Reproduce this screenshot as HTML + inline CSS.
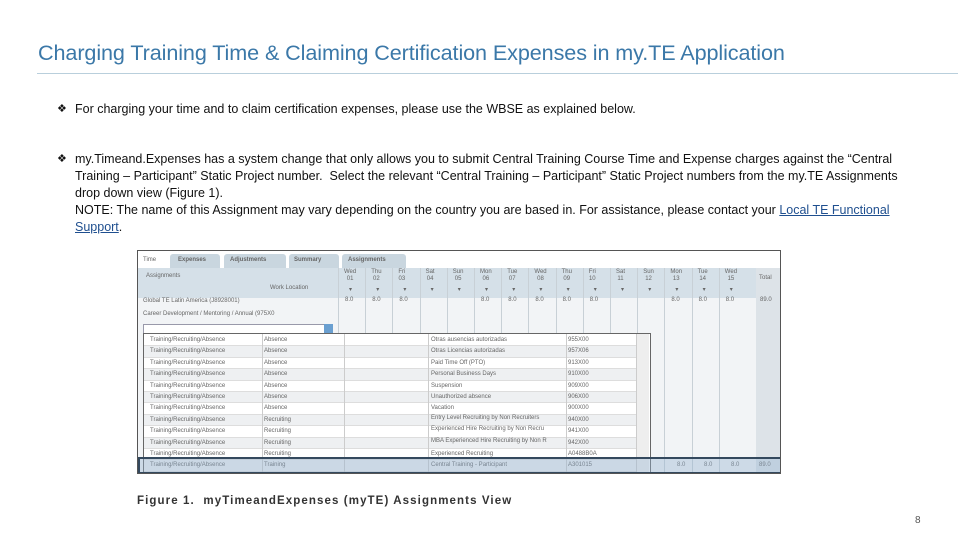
<!DOCTYPE html>
<html><head><meta charset="utf-8"><style>
*{margin:0;padding:0;box-sizing:border-box}
body{width:960px;height:540px;background:#fff;position:relative;overflow:hidden;font-family:"Liberation Sans",sans-serif}
.title{position:absolute;left:38px;top:40px;font-size:21.6px;color:#3b78a8;white-space:nowrap;letter-spacing:-0.1px}
.rule{position:absolute;left:37px;top:73px;width:921px;height:1px;background:#b9cfdc}
.b{position:absolute;left:57px;font-size:12.5px;color:#111;line-height:17px;white-space:nowrap}
.b .d{position:absolute;left:0;top:0;font-size:11px}
.b p{margin-left:18px}
a{color:#1f4f8f}
.s{position:absolute;font-size:6px;color:#666;white-space:nowrap;line-height:11px}
.abs{position:absolute}
</style></head><body>
<div class="title">Charging Training Time &amp; Claiming Certification Expenses in my.TE Application</div>
<div class="rule"></div>
<div class="b" style="top:101px"><span class="d">❖</span><p>For charging your time and to claim certification expenses, please use the WBSE as explained below.</p></div>
<div class="b" style="top:151px"><span class="d">❖</span><p>my.Timeand.Expenses has a system change that only allows you to submit Central Training Course Time and Expense charges against the “Central<br>Training – Participant” Static Project number.&nbsp; Select the relevant “Central Training – Participant” Static Project numbers from the my.TE Assignments<br>drop down view (Figure 1).<br>NOTE: The name of this Assignment may vary depending on the country you are based in. For assistance, please contact your <a href="#">Local TE Functional<br>Support</a>.</p></div>

<div class="abs" style="left:137px;top:250px;width:644px;height:224px;border:1px solid #555;background:#fff;overflow:hidden">
 <div class="s" style="left:5px;top:4px">Time</div>
 <div class="abs" style="left:32px;top:3px;width:50px;height:14px;background:#c9d6df;border-radius:3px 3px 0 0"></div><div class="s" style="left:40px;top:4px;font-weight:bold">Expenses</div>
 <div class="abs" style="left:86px;top:3px;width:62px;height:14px;background:#c9d6df;border-radius:3px 3px 0 0"></div><div class="s" style="left:92px;top:4px;font-weight:bold">Adjustments</div>
 <div class="abs" style="left:151px;top:3px;width:50px;height:14px;background:#c9d6df;border-radius:3px 3px 0 0"></div><div class="s" style="left:156px;top:4px;font-weight:bold">Summary</div>
 <div class="abs" style="left:204px;top:3px;width:64px;height:14px;background:#c9d6df;border-radius:3px 3px 0 0"></div><div class="s" style="left:210px;top:4px;font-weight:bold">Assignments</div>
 <div class="abs" style="left:0;top:17px;width:644px;height:30px;background:#d5e0e8"></div>
 <div class="s" style="left:8px;top:20px">Assignments</div>
 <div class="s" style="left:132px;top:32px">Work Location</div>
 <div class="abs" style="left:0;top:47px;width:644px;height:177px;background:#f2f4f6"></div>
 <div class="abs" style="left:618px;top:17px;width:26px;height:207px;background:#dde3e8"></div>
 <div class="s" style="left:5px;top:45px">Global TE Latin America (J8928001)</div>
 <div class="s" style="left:5px;top:58px">Career Development / Mentoring / Annual (975X0</div>
 <div class="abs" style="left:5px;top:73px;width:190px;height:10px;border:1px solid #99a;background:#fff"></div>
 <div class="abs" style="left:186px;top:73px;width:9px;height:10px;background:#6a9fd0"></div>
 <div id="days"></div>
 <div class="abs" style="left:5px;top:82px;width:508px;height:142px;border:1px solid #666;background:#fff"></div>
 <div class="abs" style="left:498px;top:83px;width:13px;height:140px;background:#eee;border-left:1px solid #ccc"></div>
 <div id="list"></div>
 <div class="abs" style="left:0;top:206px;width:644px;height:17px;border:2px solid #34495e;background:rgba(150,180,210,0.4)"></div>
</div>
<div class="abs" style="left:137px;top:495px;font-size:11.5px;font-weight:bold;color:#333;letter-spacing:1.1px">Figure 1.&nbsp; myTimeandExpenses (myTE) Assignments View</div>
<div class="abs" style="left:915px;top:515px;font-size:10px;color:#555">8</div>
<script>
var d=document.getElementById('days'),h='';
var n=['Wed 01','Thu 02','Fri 03','Sat 04','Sun 05','Mon 06','Tue 07','Wed 08','Thu 09','Fri 10','Sat 11','Sun 12','Mon 13','Tue 14','Wed 15'];
var v=['8.0','8.0','8.0','','','8.0','8.0','8.0','8.0','8.0','','','8.0','8.0','8.0'];
for(var i=0;i<15;i++){var x=200+i*27.2,p=n[i].split(' ');
h+='<div class="abs" style="left:'+x+'px;top:17px;width:1px;height:207px;background:#c8d0d6"></div>';
h+='<div class="s" style="left:'+(x+6)+'px;top:18px;line-height:7px;text-align:center">'+p[0]+'<br>'+p[1]+'</div>';
h+='<div class="s" style="left:'+(x+11)+'px;top:34px">▾</div>';
if(v[i])h+='<div class="s" style="left:'+(x+7)+'px;top:44px">'+v[i]+'</div>';}
h+='<div class="s" style="left:621px;top:22px">Total</div><div class="s" style="left:622px;top:44px">89.0</div>';
d.innerHTML=h;
var L=[['Absence','Otras ausencias autorizadas','955X00'],['Absence','Otras Licencias autorizadas','957X06'],['Absence','Paid Time Off (PTO)','913X00'],['Absence','Personal Business Days','910X00'],['Absence','Suspension','909X00'],['Absence','Unauthorized absence','906X00'],['Absence','Vacation','900X00'],['Recruiting','Entry Level Recruiting by Non Recruiters','940X00'],['Recruiting','Experienced Hire Recruiting by Non Recru','941X00'],['Recruiting','MBA Experienced Hire Recruiting by Non R','942X00'],['Recruiting','Experienced Recruiting','A0488B0A'],['Training','Central Training - Participant','A301015']];
h='';for(var j=0;j<12;j++){var y=84+j*11.4;
h+='<div class="abs" style="left:6px;top:'+y+'px;width:492px;height:11.4px;background:'+(j%2?'#eef0f2':'#fff')+';border-bottom:1px solid #ddd"></div>';
h+='<div class="s" style="left:12px;top:'+y+'px">Training/Recruiting/Absence</div><div class="s" style="left:126px;top:'+y+'px">'+L[j][0]+'</div><div class="s" style="left:293px;top:'+(y+(L[j][1].length>30?0:2))+'px;line-height:6px;width:130px;white-space:normal">'+L[j][1]+'</div><div class="s" style="left:430px;top:'+y+'px">'+L[j][2]+'</div>';}
h+='<div class="abs" style="left:124px;top:83px;width:1px;height:140px;background:#ccc"></div><div class="abs" style="left:206px;top:83px;width:1px;height:140px;background:#ccc"></div><div class="abs" style="left:290px;top:83px;width:1px;height:140px;background:#ccc"></div><div class="abs" style="left:428px;top:83px;width:1px;height:140px;background:#ccc"></div>';
h+='<div class="s" style="left:539px;top:209px">8.0</div><div class="s" style="left:566px;top:209px">8.0</div><div class="s" style="left:593px;top:209px">8.0</div><div class="s" style="left:621px;top:209px">89.0</div>';
document.getElementById('list').innerHTML=h;
</script>
</body></html>
